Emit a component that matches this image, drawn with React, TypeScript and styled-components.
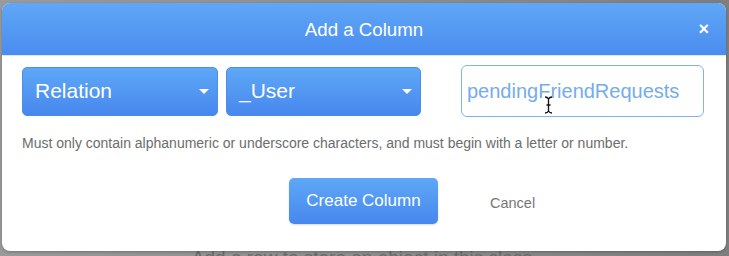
import React from "react";
import styled, { createGlobalStyle } from "styled-components";

const Global = createGlobalStyle`
  html, body { margin: 0; padding: 0; }
  body {
    width: 729px; height: 256px; overflow: hidden;
    background: linear-gradient(90deg, #9a9a9a 0%, #8b8b8b 60%, #7e7e7e 100%);
    font-family: "Liberation Sans", Arial, sans-serif;
  }
`;

const Page = styled.div`
  position: relative;
  width: 729px;
  height: 256px;
  display: flex;
  flex-direction: column;
  justify-content: flex-end;
  align-items: center;
`;

const BackText = styled.div`
  font-size: 19px;
  color: #6a6a6a;
  margin-bottom: -13px;
`;

const Modal = styled.div`
  position: absolute;
  left: 2px;
  top: 3px;
  width: 724px;
  height: 248px;
  background: #fff;
  border-radius: 8px;
  overflow: hidden;
  box-shadow: 0 1px 3px rgba(0, 0, 0, 0.25);
  display: flex;
  flex-direction: column;
`;

const Header = styled.div`
  height: 52px;
  flex: none;
  background: linear-gradient(180deg, #5fa7f6 0%, #4a8cef 100%);
  border-bottom: 1px solid #d6ebfb;
  display: flex;
  align-items: center;
  justify-content: center;
  position: relative;
`;

const Title = styled.div`
  color: #fff;
  font-size: 18.7px;
  margin-top: 2px;
`;

const Close = styled.div`
  position: absolute;
  right: 17px;
  top: 16px;
  color: #fff;
  font-size: 18px;
  font-weight: bold;
`;

const Body = styled.div`
  padding: 9px 22px 0 20px;
  display: flex;
  flex-direction: column;
`;

const Row = styled.div`
  display: flex;
  align-items: center;
  gap: 8px;
`;

const Select = styled.div<{ $w: number }>`
  width: ${(p) => p.$w}px;
  height: 49px;
  box-sizing: border-box;
  border-radius: 5px;
  background: linear-gradient(180deg, #5ea8f6 0%, #4787ee 100%);
  border: 1px solid #4b8de8;
  color: #fff;
  font-size: 21px;
  display: flex;
  align-items: center;
  justify-content: space-between;
  padding: 0 8px 0 12px;
`;

const Caret = styled.span`
  width: 0;
  height: 0;
  border-left: 5px solid transparent;
  border-right: 5px solid transparent;
  border-top: 5px solid #fff;
`;

const InputBox = styled.div`
  position: relative;
  margin-left: 32px;
  width: 243px;
  height: 52px;
  box-sizing: border-box;
  border: 1px solid #7eb3ef;
  border-radius: 6px;
  display: flex;
  align-items: center;
  padding-left: 5px;
  color: #74acec;
  font-size: 20px;
`;

const Cursor = styled.svg`
  position: absolute;
  left: 82px;
  top: 30px;
`;

const Help = styled.div`
  margin-top: 18px;
  font-size: 14px;
  color: #6c6c6c;
  white-space: nowrap;
`;

const Actions = styled.div`
  margin-top: 27px;
  display: flex;
  align-items: center;
  padding-left: 267px;
`;

const Primary = styled.div`
  width: 149px;
  height: 46px;
  box-sizing: border-box;
  border-radius: 5px;
  background: linear-gradient(180deg, #5ea8f6 0%, #4787ee 100%);
  box-shadow: 0 1px 2px rgba(0, 0, 0, 0.15);
  color: #fff;
  font-size: 17px;
  display: flex;
  align-items: center;
  justify-content: center;
`;

const Cancel = styled.div`
  margin-left: 52px;
  margin-top: 4px;
  color: #767676;
  font-size: 14.5px;
`;

export default function App() {
  return (
    <>
      <Global />
      <Page>
        <BackText>Add a row to store an object in this class.</BackText>
        <Modal>
          <Header>
            <Title>Add a Column</Title>
            <Close>×</Close>
          </Header>
          <Body>
            <Row>
              <Select $w={196}>
                Relation
                <Caret />
              </Select>
              <Select $w={195}>
                _User
                <Caret />
              </Select>
              <InputBox>
                pendingFriendRequests
                <Cursor width="9" height="18" viewBox="0 0 9 18">
                  <path d="M1 1 C3 1 4 2 4.5 3 C5 2 6 1 8 1 M4.5 3 V15 M1 17 C3 17 4 16 4.5 15 C5 16 6 17 8 17 M2.5 9 H6.5" stroke="#111" strokeWidth="1.3" fill="none" />
                </Cursor>
              </InputBox>
            </Row>
            <Help>Must only contain alphanumeric or underscore characters, and must begin with a letter or number.</Help>
            <Actions>
              <Primary>Create Column</Primary>
              <Cancel>Cancel</Cancel>
            </Actions>
          </Body>
        </Modal>
      </Page>
    </>
  );
}
